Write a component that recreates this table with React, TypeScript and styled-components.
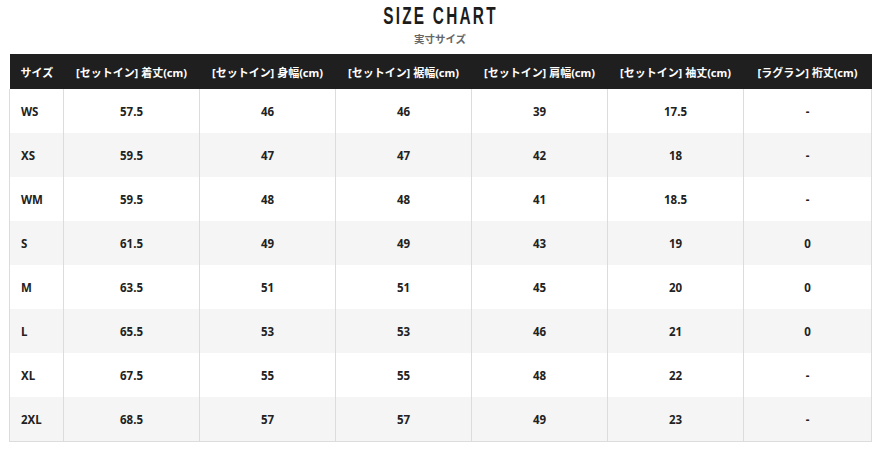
import styled, { createGlobalStyle } from 'styled-components';

const GlobalStyle = createGlobalStyle`
  html, body {
    margin: 0;
    padding: 0;
    background: #fff;
  }
  body {
    font-family: "Noto Sans", "Noto Sans CJK JP", sans-serif;
    color: #222;
  }
`;

const headers = [
  'サイズ',
  '[セットイン] 着丈(cm)',
  '[セットイン] 身幅(cm)',
  '[セットイン] 裾幅(cm)',
  '[セットイン] 肩幅(cm)',
  '[セットイン] 袖丈(cm)',
  '[ラグラン] 裄丈(cm)',
];

const rows: string[][] = [
  ['WS', '57.5', '46', '46', '39', '17.5', '-'],
  ['XS', '59.5', '47', '47', '42', '18', '-'],
  ['WM', '59.5', '48', '48', '41', '18.5', '-'],
  ['S', '61.5', '49', '49', '43', '19', '0'],
  ['M', '63.5', '51', '51', '45', '20', '0'],
  ['L', '65.5', '53', '53', '46', '21', '0'],
  ['XL', '67.5', '55', '55', '48', '22', '-'],
  ['2XL', '68.5', '57', '57', '49', '23', '-'],
];

const colWidths = [54, 136, 136, 136, 136, 136, 128];

const Page = styled.div`
  padding: 0 8px 0 9px;
`;

const TitleBlock = styled.div`
  display: flex;
  flex-direction: column;
  align-items: center;
  height: 54px;
`;

const Title = styled.h2`
  margin: 2px 0 0;
  font-family: "Liberation Sans", sans-serif;
  font-weight: 700;
  font-size: 24px;
  line-height: 28px;
  letter-spacing: 3.5px;
  color: #1c1c1c;
  transform: scaleX(0.64);
  white-space: nowrap;
`;

const Subtitle = styled.div`
  margin-top: 3px;
  font-family: "Noto Sans CJK JP", sans-serif;
  font-weight: 700;
  font-size: 10.5px;
  line-height: 12px;
  color: #666;
`;

const Table = styled.table`
  width: 862px;
  table-layout: fixed;
  border-collapse: collapse;
  font-family: "Noto Sans", "Noto Sans CJK JP", sans-serif;
  font-weight: 700;
  font-size: 11.5px;
`;

const HeadCell = styled.th<{ $first?: boolean }>`
  height: 35px;
  padding: 0 ${(p) => (p.$first ? '11px' : '0')};
  background: #1f1f1f;
  color: #fff;
  font-size: 11px;
  font-weight: 700;
  text-align: ${(p) => (p.$first ? 'left' : 'center')};
  white-space: nowrap;
`;

const Row = styled.tr<{ $shade: boolean }>`
  background: ${(p) => (p.$shade ? '#f5f5f5' : '#fff')};
`;

const Cell = styled.td<{ $first?: boolean }>`
  height: 44px;
  padding: 0 ${(p) => (p.$first ? '11px' : '0')};
  border: 1px solid #dcdcdc;
  border-top: none;
  border-bottom: none;
  color: #222;
  text-align: ${(p) => (p.$first ? 'left' : 'center')};
`;

const LastRow = styled(Row)`
  & > td {
    border-bottom: 1px solid #dcdcdc;
  }
`;

export default function App() {
  return (
    <Page>
      <GlobalStyle />
      <TitleBlock>
        <Title>SIZE CHART</Title>
        <Subtitle>実寸サイズ</Subtitle>
      </TitleBlock>
      <Table>
        <colgroup>
          {colWidths.map((w, i) => (
            <col key={i} style={{ width: w }} />
          ))}
        </colgroup>
        <thead>
          <tr>
            {headers.map((h, i) => (
              <HeadCell key={h} $first={i === 0}>
                {h}
              </HeadCell>
            ))}
          </tr>
        </thead>
        <tbody>
          {rows.map((r, ri) => {
            const R = ri === rows.length - 1 ? LastRow : Row;
            return (
              <R key={r[0]} $shade={ri % 2 === 1}>
                {r.map((c, ci) => (
                  <Cell key={ci} $first={ci === 0}>
                    {c}
                  </Cell>
                ))}
              </R>
            );
          })}
        </tbody>
      </Table>
    </Page>
  );
}
